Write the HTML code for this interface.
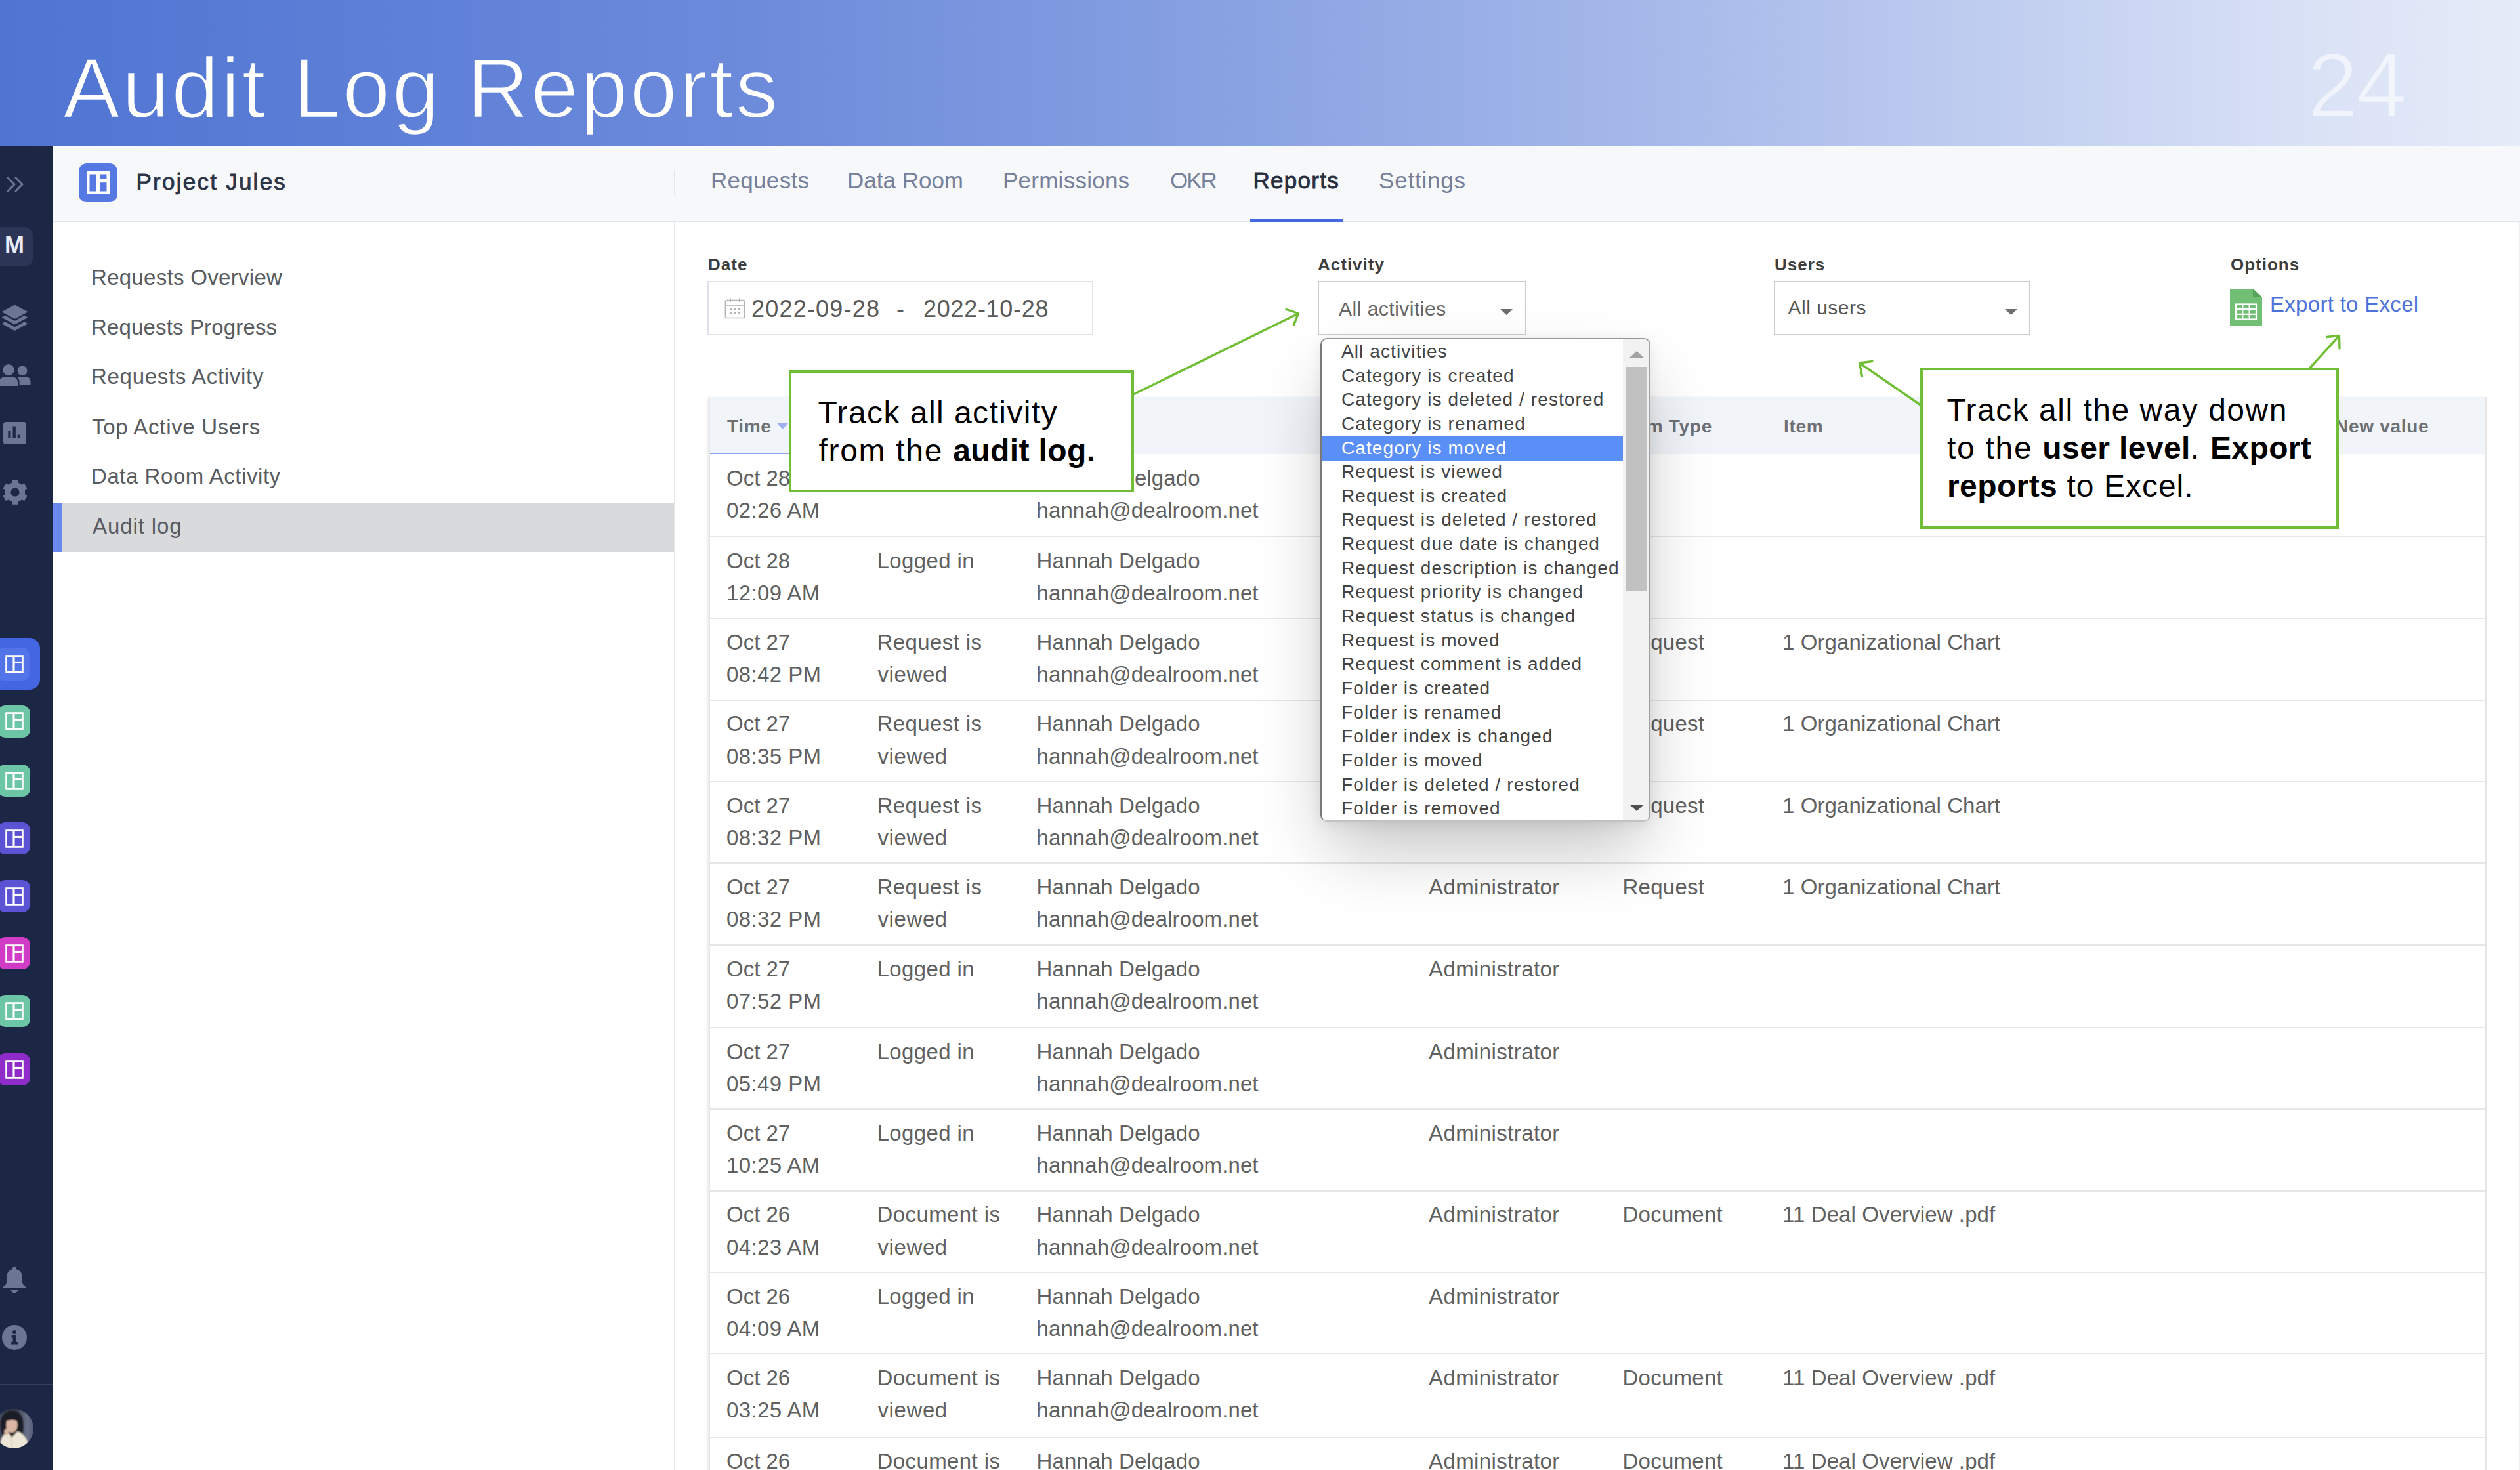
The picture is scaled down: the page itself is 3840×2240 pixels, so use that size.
<!DOCTYPE html>
<html lang="en">
<head>
<meta charset="utf-8">
<title>Audit Log Reports</title>
<style>
*{box-sizing:border-box;margin:0;padding:0}
html,body{width:3840px;height:2240px;overflow:hidden;background:#fff}
body{font-family:"Liberation Sans",sans-serif;position:relative;color:#555}
span,div,svg{position:absolute}
span{white-space:pre}
b{font-weight:700;letter-spacing:.4px}
.hdr{left:0;top:0;width:3840px;height:222px;background:linear-gradient(90deg,#4f74d2 0%,#5d7fd7 15%,#6d8bdb 30%,#829de0 45%,#98aee6 58%,#aebfeb 70%,#c5d2f1 82%,#dae2f6 92%,#e6ebf8 100%)}
.side{left:0;top:222px;width:81px;height:2018px;background:#1c2645;overflow:hidden}
.topbar{left:81px;top:222px;width:3759px;height:116px;background:#f7f8fa;border-bottom:2px solid #e3e6ec}
.leftp{left:81px;top:338px;width:947px;height:1902px;background:#fff}
.vline{left:1027px;top:338px;width:2px;height:1902px;background:#e6e8ed}
.main{left:1029px;top:338px;width:2809px;height:1902px;background:#fff}
.redge{left:3838px;top:338px;width:2px;height:1902px;background:#eceef2}
.sel{left:81px;top:766px;width:946px;height:75px;background:#d9dadc;border-left:13px solid #6b88ef}
.pj{width:50px;height:49px;left:-4px;border-radius:12px}
.tbl{left:1080px;top:605px;width:2709px;height:1640px;border-left:2px solid #e4e5e8;border-right:2px solid #e6e6e6;box-shadow:-3px 0 5px -2px rgba(0,0,0,.12)}
.th{left:0;top:0;width:2705px;height:87px;background:#f1f4f8}
.rl{left:0;width:2705px;height:2px;background:#e6e6e8}
.box{border:2px solid #cdcdcd;background:#fff}
.co{border:4px solid #6fbe35;background:#fff}
.pop{left:2012px;top:515px;width:503px;height:737px;background:#fff;border:2px solid;border-color:#989898 #a0a0a0 #c2c2c2 #787878;border-radius:10px;box-shadow:0 52px 100px -12px rgba(0,0,0,.24),0 4px 20px rgba(0,0,0,.08);overflow:hidden}
.pop span{left:30px;font-size:28px;line-height:36px;height:37px;letter-spacing:1.1px;color:#444}
</style>
</head>
<body>

<div class="hdr"></div>
<svg style="left:0;top:0" width="3840" height="222" viewBox="0 0 3840 222"><defs><linearGradient id="hg" gradientUnits="userSpaceOnUse" x1="0" y1="0" x2="3840" y2="0"><stop offset="0.0" stop-color="#4f74d2"/><stop offset="0.15" stop-color="#5d7fd7"/><stop offset="0.3" stop-color="#6d8bdb"/><stop offset="0.45" stop-color="#829de0"/><stop offset="0.58" stop-color="#98aee6"/><stop offset="0.7" stop-color="#aebfeb"/><stop offset="0.82" stop-color="#c5d2f1"/><stop offset="0.92" stop-color="#dae2f6"/><stop offset="1.0" stop-color="#e6ebf8"/></linearGradient></defs><text x="96" y="178.500" font-size="130" letter-spacing="3.050" fill="#fff" stroke="url(#hg)" stroke-width="2.300" stroke-linejoin="round">Audit Log Reports</text><text x="3516" y="177.500" font-size="139" letter-spacing="-3" fill="rgba(255,255,255,.6)" stroke="url(#hg)" stroke-width="2.400" stroke-linejoin="round">24</text></svg>
<div class="topbar"></div>
<div class="leftp"></div><div class="vline"></div><div class="main"></div><div class="redge"></div>
<div style="left:1027px;top:259px;width:2px;height:38px;background:#e3e6ec"></div>
<div style="left:120px;top:249px;width:59px;height:59px;border-radius:12px;background:#5578e2"></div>
<svg style="left:132px;top:261px" width="35" height="35" viewBox="0 0 35 35"><rect x="2.25" y="2.25" width="30.5" height="30.5" fill="none" stroke="#fff" stroke-width="4.5"/><rect x="14.4" y="2" width="5.6" height="31" fill="#fff"/><rect x="17" y="11.6" width="16" height="5.6" fill="#fff"/></svg>
<span style="left:207.5px;top:258.9px;font-size:35px;line-height:35px;color:#2e3447;letter-spacing:2.25px;-webkit-text-stroke:0.9px #2e3447;">Project Jules</span>
<span style="left:1083px;top:256.9px;font-size:35px;line-height:35px;color:#75809a;letter-spacing:0.3px;">Requests</span>
<span style="left:1291px;top:256.9px;font-size:35px;line-height:35px;color:#75809a;">Data Room</span>
<span style="left:1528px;top:256.9px;font-size:35px;line-height:35px;color:#75809a;letter-spacing:0.25px;">Permissions</span>
<span style="left:1783px;top:256.9px;font-size:35px;line-height:35px;color:#75809a;letter-spacing:-2px;">OKR</span>
<span style="left:1909.5px;top:256.9px;font-size:35px;line-height:35px;color:#2a2f3f;letter-spacing:1.3px;-webkit-text-stroke:0.9px #2a2f3f;">Reports</span>
<span style="left:2101px;top:256.9px;font-size:35px;line-height:35px;color:#75809a;letter-spacing:0.8px;">Settings</span>
<div style="left:1905px;top:334px;width:141px;height:4px;background:#4468e0"></div>
<div class="sel"></div>
<span style="left:139px;top:406.4px;font-size:33px;line-height:33px;color:#585b60;letter-spacing:0.3px;">Requests Overview</span>
<span style="left:139px;top:481.8px;font-size:33px;line-height:33px;color:#585b60;letter-spacing:0.15px;">Requests Progress</span>
<span style="left:139px;top:557.1px;font-size:33px;line-height:33px;color:#585b60;letter-spacing:0.7px;">Requests Activity</span>
<span style="left:140px;top:634.1px;font-size:33px;line-height:33px;color:#585b60;letter-spacing:0.7px;">Top Active Users</span>
<span style="left:139px;top:709.1px;font-size:33px;line-height:33px;color:#585b60;letter-spacing:0.55px;">Data Room Activity</span>
<span style="left:141px;top:785.1px;font-size:33px;line-height:33px;color:#585b60;letter-spacing:0.9px;">Audit log</span>
<div class="side">
<svg style="left:9px;top:46px" width="28" height="26" viewBox="0 0 28 26" fill="none" stroke="#6b7594" stroke-width="3" stroke-linecap="round" stroke-linejoin="round"><path d="M3 3l10 10L3 23M15 3l10 10-10 10"/></svg>
<div style="left:-12px;top:124px;width:62px;height:60px;border-radius:13px;background:#2c3555"></div>
<span style="left:7px;top:133.8px;font-size:36px;line-height:36px;color:#e8ecf5;font-weight:700;">M</span>
<svg style="left:2px;top:242px" width="41" height="41" viewBox="0 0 41 41" fill="#6b7594"><path d="M20.5 0.5L0.500 11.200l20 10.700 20-10.700z"/><path d="M5.800 16.800L0.500 19.700l20 10.700 20-10.700-5.300-2.900-14.700 7.900z"/><path d="M5.800 26.300L0.500 29.200l20 10.700 20-10.700-5.300-2.900-14.700 7.900z"/></svg>
<svg style="left:-1px;top:333px" width="48" height="33" viewBox="0 0 48 33" fill="#6b7594"><circle cx="14" cy="8.600" r="8.600"/><path d="M0 33v-5.500c0-5 3.500-8 8-8h12c4.500 0 8 3 8 8V33z"/><circle cx="35" cy="9.800" r="7.400"/><path d="M30.500 31v-4.500c0-3-1.200-5.200-3.200-6.800 .9-.4 2-.7 3.200-.7h9c4.500 0 8 2.800 8 7.500V31z"/></svg>
<svg style="left:5px;top:421px" width="35" height="34" viewBox="0 0 35 34"><rect width="35" height="34" rx="4" fill="#6b7594"/><rect x="7.400" y="13.700" width="4" height="11" fill="#1c2645"/><rect x="14.500" y="6.500" width="4.300" height="18.200" fill="#1c2645"/><rect x="21.700" y="19.600" width="4.300" height="5.100" fill="#1c2645"/></svg>
<svg style="left:3px;top:508px" width="40" height="40" viewBox="0 0 40 40"><path fill-rule="evenodd" fill="#6b7594" d="M24.7 34.6L24.2 38.8L15.8 38.8L15.3 34.6L9.8 31.4L5.8 33.1L1.6 25.8L5.0 23.2L5.0 16.8L1.6 14.2L5.8 6.9L9.8 8.6L15.3 5.4L15.8 1.2L24.2 1.2L24.7 5.4L30.2 8.6L34.2 6.9L38.4 14.2L35.0 16.8L35.0 23.2L38.4 25.8L34.2 33.1L30.2 31.4ZM13.4 20a6.6 6.6 0 1 0 13.2 0a6.6 6.6 0 1 0 -13.2 0Z"/></svg>
<div style="left:-20px;top:750px;width:81px;height:79px;border-radius:16px;background:#4566e2"></div>
<div style="left:-6px;top:765px;width:51px;height:50px;border-radius:11px;background:#5373e8"></div>
<svg style="left:7.5px;top:776px" width="28" height="28" viewBox="0 0 26 26"><rect x="1.5" y="1.5" width="23" height="23" fill="none" stroke="#fff" stroke-width="2.600"/><rect x="10.600" y="1" width="2.900" height="24" fill="#fff"/><rect x="12" y="9.200" width="13" height="2.900" fill="#fff"/></svg>
<div class="pj" style="top:852.5px;background:#6cc5a5"></div>
<svg style="left:7.5px;top:863.0px" width="28" height="28" viewBox="0 0 26 26"><rect x="1.5" y="1.5" width="23" height="23" fill="none" stroke="#fff" stroke-width="2.600"/><rect x="10.600" y="1" width="2.900" height="24" fill="#fff"/><rect x="12" y="9.200" width="13" height="2.900" fill="#fff"/></svg>
<div class="pj" style="top:943px;background:#6cc5a5"></div>
<svg style="left:7.5px;top:953.5px" width="28" height="28" viewBox="0 0 26 26"><rect x="1.5" y="1.5" width="23" height="23" fill="none" stroke="#fff" stroke-width="2.600"/><rect x="10.600" y="1" width="2.900" height="24" fill="#fff"/><rect x="12" y="9.200" width="13" height="2.900" fill="#fff"/></svg>
<div class="pj" style="top:1031px;background:#5b52d4"></div>
<svg style="left:7.5px;top:1041.5px" width="28" height="28" viewBox="0 0 26 26"><rect x="1.5" y="1.5" width="23" height="23" fill="none" stroke="#fff" stroke-width="2.600"/><rect x="10.600" y="1" width="2.900" height="24" fill="#fff"/><rect x="12" y="9.200" width="13" height="2.900" fill="#fff"/></svg>
<div class="pj" style="top:1119px;background:#5b52d4"></div>
<svg style="left:7.5px;top:1129.5px" width="28" height="28" viewBox="0 0 26 26"><rect x="1.5" y="1.5" width="23" height="23" fill="none" stroke="#fff" stroke-width="2.600"/><rect x="10.600" y="1" width="2.900" height="24" fill="#fff"/><rect x="12" y="9.200" width="13" height="2.900" fill="#fff"/></svg>
<div class="pj" style="top:1206px;background:#d03cc6"></div>
<svg style="left:7.5px;top:1216.5px" width="28" height="28" viewBox="0 0 26 26"><rect x="1.5" y="1.5" width="23" height="23" fill="none" stroke="#fff" stroke-width="2.600"/><rect x="10.600" y="1" width="2.900" height="24" fill="#fff"/><rect x="12" y="9.200" width="13" height="2.900" fill="#fff"/></svg>
<div class="pj" style="top:1294px;background:#6cc5a5"></div>
<svg style="left:7.5px;top:1304.5px" width="28" height="28" viewBox="0 0 26 26"><rect x="1.5" y="1.5" width="23" height="23" fill="none" stroke="#fff" stroke-width="2.600"/><rect x="10.600" y="1" width="2.900" height="24" fill="#fff"/><rect x="12" y="9.200" width="13" height="2.900" fill="#fff"/></svg>
<div class="pj" style="top:1383px;background:#8f2bc8"></div>
<svg style="left:7.5px;top:1393.5px" width="28" height="28" viewBox="0 0 26 26"><rect x="1.5" y="1.5" width="23" height="23" fill="none" stroke="#fff" stroke-width="2.600"/><rect x="10.600" y="1" width="2.900" height="24" fill="#fff"/><rect x="12" y="9.200" width="13" height="2.900" fill="#fff"/></svg>
<svg style="left:4px;top:1708px" width="36" height="40" viewBox="0 0 36 40" fill="#6b7594"><path d="M18 0c1.7 0 3 1.300 3 3v1.200c5.500 1.300 9 6 9 12v7c0 3 2 5.500 5 7.500v2.300H1v-2.300c3-2 5-4.500 5-7.500v-7c0-6 3.500-10.700 9-12V3c0-1.700 1.300-3 3-3z"/><path d="M12.500 35.500h11c0 2.500-2.500 4.500-5.500 4.500s-5.500-2-5.500-4.500z"/></svg>
<svg style="left:3px;top:1797px" width="38" height="38" viewBox="0 0 38 38"><circle cx="19" cy="19" r="19" fill="#6b7594"/><circle cx="19" cy="11" r="3" fill="#1c2645"/><path d="M14.500 16h7v10h2.500v3.500h-10V26h2.500v-6.500h-2z" fill="#1c2645"/></svg>
<div style="left:0;top:1887px;width:81px;height:2px;background:#333d5e"></div>
<svg style="left:-9px;top:1925px" width="60" height="60" viewBox="0 0 60 60"><defs><clipPath id="av"><circle cx="30" cy="30" r="30"/></clipPath><linearGradient id="avbg" x1="0" y1="0" x2="1" y2="0"><stop offset="0" stop-color="#4a5064"/><stop offset=".55" stop-color="#3a3f50"/><stop offset=".8" stop-color="#6a7289"/><stop offset="1" stop-color="#4b536c"/></linearGradient><filter id="avbl" x="-10%" y="-10%" width="120%" height="120%"><feGaussianBlur stdDeviation="0.9"/></filter></defs><g clip-path="url(#av)"><g filter="url(#avbl)"><rect x="-4" y="-4" width="68" height="68" fill="url(#avbg)"/><path d="M10 30C8 12 16 1 28 2s17 10 17 24c0 8-1 14-5 18l-12-4-14 2c-2-3-3.500-7-4-12z" fill="#1f1e25"/><ellipse cx="27" cy="24" rx="8.800" ry="12" fill="#dcb7a3"/><path d="M17 18c3-7 12-9 19-3 2 2 3 5 3 8-3-4-8-7-13-6-4 .5-7 1-9 1z" fill="#1f1e25"/><path d="M9 62c0-15 4-24 11-27l7 6 9-7c9 3 16 12 17 28z" fill="#ede6d6"/><path d="M22 36l5 7 7-7c-3 2-8 2-12 0z" fill="#3a2f2c"/><ellipse cx="19" cy="35" rx="3.500" ry="5" fill="#dcb7a3"/><path d="M27 43v19" stroke="#d9d0bb" stroke-width="1.500"/></g></g></svg>
</div>
<span style="left:1079px;top:389.5px;font-size:26px;line-height:26px;color:#3d3d3d;font-weight:700;letter-spacing:1.0px;">Date</span>
<span style="left:2008px;top:389.5px;font-size:26px;line-height:26px;color:#3d3d3d;font-weight:700;letter-spacing:1.0px;">Activity</span>
<span style="left:2704px;top:389.5px;font-size:26px;line-height:26px;color:#3d3d3d;font-weight:700;letter-spacing:1.0px;">Users</span>
<span style="left:3399px;top:389.5px;font-size:26px;line-height:26px;color:#3d3d3d;font-weight:700;letter-spacing:1.0px;">Options</span>
<div class="box" style="left:1078px;top:428px;width:588px;height:83px;border-color:#dfe2e8"></div>
<svg style="left:1104px;top:453px" width="32" height="33" viewBox="0 0 32 33" fill="none" stroke="#b3b3b3" stroke-width="1.700"><rect x="1.500" y="4.500" width="29" height="27" rx="2"/><path d="M1.500 12h29M9 1v6M23 1v6"/><path d="M8 18h3M14.500 18h3M21 18h3M8 24h3M14.500 24h3M21 24h3" stroke-width="2.600"/></svg>
<span style="left:1145px;top:452.5px;font-size:36px;line-height:36px;color:#5a5a5a;letter-spacing:1.2px;">2022-09-28</span>
<span style="left:1366px;top:452.5px;font-size:36px;line-height:36px;color:#5a5a5a;">-</span>
<span style="left:1407px;top:452.5px;font-size:36px;line-height:36px;color:#5a5a5a;letter-spacing:0.7px;">2022-10-28</span>
<div class="box" style="left:2008px;top:428px;width:318px;height:83px"></div>
<span style="left:2040px;top:455.6px;font-size:30px;line-height:30px;color:#666;letter-spacing:0.5px;">All activities</span>
<svg style="left:2286px;top:471px" width="19" height="9" viewBox="0 0 19 9"><path d="M0 0h19L9.500 9z" fill="#6e6e6e"/></svg>
<div class="box" style="left:2703px;top:428px;width:391px;height:83px"></div>
<span style="left:2724.5px;top:453.6px;font-size:30px;line-height:30px;color:#555;letter-spacing:0.5px;">All users</span>
<svg style="left:3055px;top:471px" width="19" height="9" viewBox="0 0 19 9"><path d="M0 0h19L9.500 9z" fill="#6e6e6e"/></svg>
<svg style="left:3398px;top:440px" width="49" height="57" viewBox="0 0 49 57"><path d="M0 0h35l14 13v44H0z" fill="#70bf74"/><path d="M35 0l14 13H35z" fill="#57a45c"/><g fill="none" stroke="#fff" stroke-width="2.200"><rect x="9" y="23.500" width="31" height="23"/><path d="M19.300 23.500v23M29.600 23.500v23M9 31.200h31M9 38.900h31"/></g></svg>
<span style="left:3459px;top:446.6px;font-size:33px;line-height:33px;color:#4c72da;letter-spacing:0.3px;">Export to Excel</span>
<div class="tbl"><div class="th"></div>
<div style="left:0;top:85px;width:122px;height:2px;background:#8fa3ee"></div>
<div class="rl" style="top:211.9px"></div>
<div class="rl" style="top:336.0px"></div>
<div class="rl" style="top:460.5px"></div>
<div class="rl" style="top:585.1px"></div>
<div class="rl" style="top:709.3px"></div>
<div class="rl" style="top:833.7px"></div>
<div class="rl" style="top:959.8px"></div>
<div class="rl" style="top:1084.2px"></div>
<div class="rl" style="top:1208.6px"></div>
<div class="rl" style="top:1333.0px"></div>
<div class="rl" style="top:1457.2px"></div>
<div class="rl" style="top:1583.8px"></div>
<div class="rl" style="top:1708.2px"></div>
</div>
<span style="left:1108px;top:636.3px;font-size:28px;line-height:28px;color:#6d7075;font-weight:700;letter-spacing:0.7px;">Time</span>
<svg style="left:1184px;top:645px" width="17" height="9" viewBox="0 0 17 9"><path d="M0 0h17L8.500 9z" fill="#9db0f2"/></svg>
<span style="left:1338px;top:636.3px;font-size:28px;line-height:28px;color:#6d7075;font-weight:700;letter-spacing:0.7px;">Activity</span>
<span style="left:1582px;top:636.3px;font-size:28px;line-height:28px;color:#6d7075;font-weight:700;letter-spacing:0.7px;">User</span>
<span style="left:2177px;top:636.3px;font-size:28px;line-height:28px;color:#6d7075;font-weight:700;letter-spacing:0.7px;">Role</span>
<span style="left:2474px;top:636.3px;font-size:28px;line-height:28px;color:#6d7075;font-weight:700;letter-spacing:0.7px;">Item Type</span>
<span style="left:2718px;top:636.3px;font-size:28px;line-height:28px;color:#6d7075;font-weight:700;letter-spacing:0.7px;">Item</span>
<span style="left:3140px;top:636.3px;font-size:28px;line-height:28px;color:#6d7075;font-weight:700;letter-spacing:0.7px;">Old value</span>
<span style="left:3558px;top:636.3px;font-size:28px;line-height:28px;color:#6d7075;font-weight:700;letter-spacing:0.7px;">New value</span>
<span style="left:1107px;top:711.8px;font-size:33px;line-height:33px;color:#606060;">Oct 28</span>
<span style="left:1107px;top:761.1px;font-size:33px;line-height:33px;color:#606060;letter-spacing:0.4px;">02:26 AM</span>
<span style="left:1336.5px;top:711.8px;font-size:33px;line-height:33px;color:#606060;letter-spacing:0.4px;">Logged in</span>
<span style="left:1579.5px;top:711.8px;font-size:33px;line-height:33px;color:#606060;letter-spacing:0.1px;">Hannah Delgado</span>
<span style="left:1579.5px;top:761.1px;font-size:33px;line-height:33px;color:#606060;letter-spacing:0.1px;">hannah@dealroom.net</span>
<span style="left:1107px;top:837.7px;font-size:33px;line-height:33px;color:#606060;">Oct 28</span>
<span style="left:1107px;top:887.0px;font-size:33px;line-height:33px;color:#606060;letter-spacing:0.4px;">12:09 AM</span>
<span style="left:1336.5px;top:837.7px;font-size:33px;line-height:33px;color:#606060;letter-spacing:0.4px;">Logged in</span>
<span style="left:1579.5px;top:837.7px;font-size:33px;line-height:33px;color:#606060;letter-spacing:0.1px;">Hannah Delgado</span>
<span style="left:1579.5px;top:887.0px;font-size:33px;line-height:33px;color:#606060;letter-spacing:0.1px;">hannah@dealroom.net</span>
<span style="left:1107px;top:961.8px;font-size:33px;line-height:33px;color:#606060;">Oct 27</span>
<span style="left:1107px;top:1011.1px;font-size:33px;line-height:33px;color:#606060;letter-spacing:0.4px;">08:42 PM</span>
<span style="left:1336.5px;top:961.8px;font-size:33px;line-height:33px;color:#606060;letter-spacing:0.4px;">Request is</span>
<span style="left:1337.5px;top:1011.1px;font-size:33px;line-height:33px;color:#606060;letter-spacing:0.6px;">viewed</span>
<span style="left:1579.5px;top:961.8px;font-size:33px;line-height:33px;color:#606060;letter-spacing:0.1px;">Hannah Delgado</span>
<span style="left:1579.5px;top:1011.1px;font-size:33px;line-height:33px;color:#606060;letter-spacing:0.1px;">hannah@dealroom.net</span>
<span style="left:2177px;top:961.8px;font-size:33px;line-height:33px;color:#606060;letter-spacing:0.4px;">Administrator</span>
<span style="left:2472.5px;top:961.8px;font-size:33px;line-height:33px;color:#606060;letter-spacing:0.25px;">Request</span>
<span style="left:2716px;top:961.8px;font-size:33px;line-height:33px;color:#606060;letter-spacing:0.1px;">1 Organizational Chart</span>
<span style="left:1107px;top:1086.3px;font-size:33px;line-height:33px;color:#606060;">Oct 27</span>
<span style="left:1107px;top:1135.6px;font-size:33px;line-height:33px;color:#606060;letter-spacing:0.4px;">08:35 PM</span>
<span style="left:1336.5px;top:1086.3px;font-size:33px;line-height:33px;color:#606060;letter-spacing:0.4px;">Request is</span>
<span style="left:1337.5px;top:1135.6px;font-size:33px;line-height:33px;color:#606060;letter-spacing:0.6px;">viewed</span>
<span style="left:1579.5px;top:1086.3px;font-size:33px;line-height:33px;color:#606060;letter-spacing:0.1px;">Hannah Delgado</span>
<span style="left:1579.5px;top:1135.6px;font-size:33px;line-height:33px;color:#606060;letter-spacing:0.1px;">hannah@dealroom.net</span>
<span style="left:2177px;top:1086.3px;font-size:33px;line-height:33px;color:#606060;letter-spacing:0.4px;">Administrator</span>
<span style="left:2472.5px;top:1086.3px;font-size:33px;line-height:33px;color:#606060;letter-spacing:0.25px;">Request</span>
<span style="left:2716px;top:1086.3px;font-size:33px;line-height:33px;color:#606060;letter-spacing:0.1px;">1 Organizational Chart</span>
<span style="left:1107px;top:1210.9px;font-size:33px;line-height:33px;color:#606060;">Oct 27</span>
<span style="left:1107px;top:1260.2px;font-size:33px;line-height:33px;color:#606060;letter-spacing:0.4px;">08:32 PM</span>
<span style="left:1336.5px;top:1210.9px;font-size:33px;line-height:33px;color:#606060;letter-spacing:0.4px;">Request is</span>
<span style="left:1337.5px;top:1260.2px;font-size:33px;line-height:33px;color:#606060;letter-spacing:0.6px;">viewed</span>
<span style="left:1579.5px;top:1210.9px;font-size:33px;line-height:33px;color:#606060;letter-spacing:0.1px;">Hannah Delgado</span>
<span style="left:1579.5px;top:1260.2px;font-size:33px;line-height:33px;color:#606060;letter-spacing:0.1px;">hannah@dealroom.net</span>
<span style="left:2177px;top:1210.9px;font-size:33px;line-height:33px;color:#606060;letter-spacing:0.4px;">Administrator</span>
<span style="left:2472.5px;top:1210.9px;font-size:33px;line-height:33px;color:#606060;letter-spacing:0.25px;">Request</span>
<span style="left:2716px;top:1210.9px;font-size:33px;line-height:33px;color:#606060;letter-spacing:0.1px;">1 Organizational Chart</span>
<span style="left:1107px;top:1335.1px;font-size:33px;line-height:33px;color:#606060;">Oct 27</span>
<span style="left:1107px;top:1384.4px;font-size:33px;line-height:33px;color:#606060;letter-spacing:0.4px;">08:32 PM</span>
<span style="left:1336.5px;top:1335.1px;font-size:33px;line-height:33px;color:#606060;letter-spacing:0.4px;">Request is</span>
<span style="left:1337.5px;top:1384.4px;font-size:33px;line-height:33px;color:#606060;letter-spacing:0.6px;">viewed</span>
<span style="left:1579.5px;top:1335.1px;font-size:33px;line-height:33px;color:#606060;letter-spacing:0.1px;">Hannah Delgado</span>
<span style="left:1579.5px;top:1384.4px;font-size:33px;line-height:33px;color:#606060;letter-spacing:0.1px;">hannah@dealroom.net</span>
<span style="left:2177px;top:1335.1px;font-size:33px;line-height:33px;color:#606060;letter-spacing:0.4px;">Administrator</span>
<span style="left:2472.5px;top:1335.1px;font-size:33px;line-height:33px;color:#606060;letter-spacing:0.25px;">Request</span>
<span style="left:2716px;top:1335.1px;font-size:33px;line-height:33px;color:#606060;letter-spacing:0.1px;">1 Organizational Chart</span>
<span style="left:1107px;top:1459.5px;font-size:33px;line-height:33px;color:#606060;">Oct 27</span>
<span style="left:1107px;top:1508.8px;font-size:33px;line-height:33px;color:#606060;letter-spacing:0.4px;">07:52 PM</span>
<span style="left:1336.5px;top:1459.5px;font-size:33px;line-height:33px;color:#606060;letter-spacing:0.4px;">Logged in</span>
<span style="left:1579.5px;top:1459.5px;font-size:33px;line-height:33px;color:#606060;letter-spacing:0.1px;">Hannah Delgado</span>
<span style="left:1579.5px;top:1508.8px;font-size:33px;line-height:33px;color:#606060;letter-spacing:0.1px;">hannah@dealroom.net</span>
<span style="left:2177px;top:1459.5px;font-size:33px;line-height:33px;color:#606060;letter-spacing:0.4px;">Administrator</span>
<span style="left:1107px;top:1585.6px;font-size:33px;line-height:33px;color:#606060;">Oct 27</span>
<span style="left:1107px;top:1634.9px;font-size:33px;line-height:33px;color:#606060;letter-spacing:0.4px;">05:49 PM</span>
<span style="left:1336.5px;top:1585.6px;font-size:33px;line-height:33px;color:#606060;letter-spacing:0.4px;">Logged in</span>
<span style="left:1579.5px;top:1585.6px;font-size:33px;line-height:33px;color:#606060;letter-spacing:0.1px;">Hannah Delgado</span>
<span style="left:1579.5px;top:1634.9px;font-size:33px;line-height:33px;color:#606060;letter-spacing:0.1px;">hannah@dealroom.net</span>
<span style="left:2177px;top:1585.6px;font-size:33px;line-height:33px;color:#606060;letter-spacing:0.4px;">Administrator</span>
<span style="left:1107px;top:1710.0px;font-size:33px;line-height:33px;color:#606060;">Oct 27</span>
<span style="left:1107px;top:1759.3px;font-size:33px;line-height:33px;color:#606060;letter-spacing:0.4px;">10:25 AM</span>
<span style="left:1336.5px;top:1710.0px;font-size:33px;line-height:33px;color:#606060;letter-spacing:0.4px;">Logged in</span>
<span style="left:1579.5px;top:1710.0px;font-size:33px;line-height:33px;color:#606060;letter-spacing:0.1px;">Hannah Delgado</span>
<span style="left:1579.5px;top:1759.3px;font-size:33px;line-height:33px;color:#606060;letter-spacing:0.1px;">hannah@dealroom.net</span>
<span style="left:2177px;top:1710.0px;font-size:33px;line-height:33px;color:#606060;letter-spacing:0.4px;">Administrator</span>
<span style="left:1107px;top:1834.4px;font-size:33px;line-height:33px;color:#606060;">Oct 26</span>
<span style="left:1107px;top:1883.7px;font-size:33px;line-height:33px;color:#606060;letter-spacing:0.4px;">04:23 AM</span>
<span style="left:1336.5px;top:1834.4px;font-size:33px;line-height:33px;color:#606060;letter-spacing:0.4px;">Document is</span>
<span style="left:1337.5px;top:1883.7px;font-size:33px;line-height:33px;color:#606060;letter-spacing:0.6px;">viewed</span>
<span style="left:1579.5px;top:1834.4px;font-size:33px;line-height:33px;color:#606060;letter-spacing:0.1px;">Hannah Delgado</span>
<span style="left:1579.5px;top:1883.7px;font-size:33px;line-height:33px;color:#606060;letter-spacing:0.1px;">hannah@dealroom.net</span>
<span style="left:2177px;top:1834.4px;font-size:33px;line-height:33px;color:#606060;letter-spacing:0.4px;">Administrator</span>
<span style="left:2472.5px;top:1834.4px;font-size:33px;line-height:33px;color:#606060;letter-spacing:0.25px;">Document</span>
<span style="left:2716px;top:1834.4px;font-size:33px;line-height:33px;color:#606060;letter-spacing:0.1px;">11 Deal Overview .pdf</span>
<span style="left:1107px;top:1958.8px;font-size:33px;line-height:33px;color:#606060;">Oct 26</span>
<span style="left:1107px;top:2008.1px;font-size:33px;line-height:33px;color:#606060;letter-spacing:0.4px;">04:09 AM</span>
<span style="left:1336.5px;top:1958.8px;font-size:33px;line-height:33px;color:#606060;letter-spacing:0.4px;">Logged in</span>
<span style="left:1579.5px;top:1958.8px;font-size:33px;line-height:33px;color:#606060;letter-spacing:0.1px;">Hannah Delgado</span>
<span style="left:1579.5px;top:2008.1px;font-size:33px;line-height:33px;color:#606060;letter-spacing:0.1px;">hannah@dealroom.net</span>
<span style="left:2177px;top:1958.8px;font-size:33px;line-height:33px;color:#606060;letter-spacing:0.4px;">Administrator</span>
<span style="left:1107px;top:2083.0px;font-size:33px;line-height:33px;color:#606060;">Oct 26</span>
<span style="left:1107px;top:2132.3px;font-size:33px;line-height:33px;color:#606060;letter-spacing:0.4px;">03:25 AM</span>
<span style="left:1336.5px;top:2083.0px;font-size:33px;line-height:33px;color:#606060;letter-spacing:0.4px;">Document is</span>
<span style="left:1337.5px;top:2132.3px;font-size:33px;line-height:33px;color:#606060;letter-spacing:0.6px;">viewed</span>
<span style="left:1579.5px;top:2083.0px;font-size:33px;line-height:33px;color:#606060;letter-spacing:0.1px;">Hannah Delgado</span>
<span style="left:1579.5px;top:2132.3px;font-size:33px;line-height:33px;color:#606060;letter-spacing:0.1px;">hannah@dealroom.net</span>
<span style="left:2177px;top:2083.0px;font-size:33px;line-height:33px;color:#606060;letter-spacing:0.4px;">Administrator</span>
<span style="left:2472.5px;top:2083.0px;font-size:33px;line-height:33px;color:#606060;letter-spacing:0.25px;">Document</span>
<span style="left:2716px;top:2083.0px;font-size:33px;line-height:33px;color:#606060;letter-spacing:0.1px;">11 Deal Overview .pdf</span>
<span style="left:1107px;top:2209.6px;font-size:33px;line-height:33px;color:#606060;">Oct 26</span>
<span style="left:1107px;top:2258.9px;font-size:33px;line-height:33px;color:#606060;letter-spacing:0.4px;">03:20 AM</span>
<span style="left:1336.5px;top:2209.6px;font-size:33px;line-height:33px;color:#606060;letter-spacing:0.4px;">Document is</span>
<span style="left:1337.5px;top:2258.9px;font-size:33px;line-height:33px;color:#606060;letter-spacing:0.6px;">viewed</span>
<span style="left:1579.5px;top:2209.6px;font-size:33px;line-height:33px;color:#606060;letter-spacing:0.1px;">Hannah Delgado</span>
<span style="left:1579.5px;top:2258.9px;font-size:33px;line-height:33px;color:#606060;letter-spacing:0.1px;">hannah@dealroom.net</span>
<span style="left:2177px;top:2209.6px;font-size:33px;line-height:33px;color:#606060;letter-spacing:0.4px;">Administrator</span>
<span style="left:2472.5px;top:2209.6px;font-size:33px;line-height:33px;color:#606060;letter-spacing:0.25px;">Document</span>
<span style="left:2716px;top:2209.6px;font-size:33px;line-height:33px;color:#606060;letter-spacing:0.1px;">11 Deal Overview .pdf</span>
<div class="pop">
<div style="left:0;top:147.500px;width:459px;height:37px;background:#5b8ff8"></div>
<span style="top:0.9px">All activities</span>
<span style="top:37.5px">Category is created</span>
<span style="top:74.2px">Category is deleted / restored</span>
<span style="top:110.8px">Category is renamed</span>
<span style="top:147.5px;color:#fff">Category is moved</span>
<span style="top:184.2px">Request is viewed</span>
<span style="top:220.8px">Request is created</span>
<span style="top:257.4px">Request is deleted / restored</span>
<span style="top:294.1px">Request due date is changed</span>
<span style="top:330.7px">Request description is changed</span>
<span style="top:367.4px">Request priority is changed</span>
<span style="top:404.0px">Request status is changed</span>
<span style="top:440.7px">Request is moved</span>
<span style="top:477.3px">Request comment is added</span>
<span style="top:514.0px">Folder is created</span>
<span style="top:550.6px">Folder is renamed</span>
<span style="top:587.3px">Folder index is changed</span>
<span style="top:623.9px">Folder is moved</span>
<span style="top:660.6px">Folder is deleted / restored</span>
<span style="top:697.2px">Folder is removed</span>
<div style="left:459px;top:0;width:40px;height:733px;background:#f2f2f2"></div>
<div style="left:463px;top:42px;width:33px;height:342px;background:#c1c1c1"></div>
<svg style="left:469px;top:18px" width="22" height="10" viewBox="0 0 22 10"><path d="M0 10h22L11 0z" fill="#a3a3a3"/></svg>
<svg style="left:469px;top:709px" width="22" height="10" viewBox="0 0 22 10"><path d="M0 0h22L11 10z" fill="#505050"/></svg>
</div>
<svg style="left:0;top:0" width="3840" height="2240" viewBox="0 0 3840 2240" fill="none" stroke="#6fbe35" stroke-width="3.400" stroke-linecap="round" stroke-linejoin="round"><path d="M1727 601L1978 478M1960 471.500L1978.500 477.500L1971.500 495"/><path d="M2927 617.500L2834 553.500M2853 550.500L2833.500 553L2837.500 573"/><path d="M3519.500 561L3564 512M3545.500 513.500L3564.500 511.500L3565 531"/></svg>
<div class="co" style="left:1202px;top:564px;width:526px;height:186px"></div>
<span style="left:1246.5px;top:605.4px;font-size:48px;line-height:48px;color:#000;letter-spacing:1.45px;">Track all activity</span>
<span style="left:1247.5px;top:663.4px;font-size:48px;line-height:48px;color:#000;letter-spacing:1.7px;">from the <b>audit log.</b></span>
<div class="co" style="left:2926px;top:560px;width:638px;height:246px"></div>
<span style="left:2966.5px;top:601.4px;font-size:48px;line-height:48px;color:#000;letter-spacing:1.5px;">Track all the way down</span>
<span style="left:2967px;top:659.4px;font-size:48px;line-height:48px;color:#000;letter-spacing:1.7px;">to the <b>user level</b>. <b>Export</b></span>
<span style="left:2967px;top:717.4px;font-size:48px;line-height:48px;color:#000;letter-spacing:1.0px;"><b>reports</b> to Excel.</span>
</body></html>
